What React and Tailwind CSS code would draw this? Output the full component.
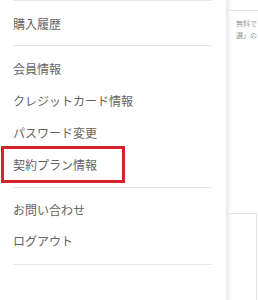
import React from 'react';

const sections = [
  ['購入履歴'],
  ['会員情報', 'クレジットカード情報', 'パスワード変更', '契約プラン情報'],
  ['お問い合わせ', 'ログアウト'],
];

const MenuItem = ({ label, tall, marked }) => (
  <div className={`relative flex items-center ${tall ? 'h-[32px]' : 'h-[31px]'}`}>
    <span>{label}</span>
    {marked && (
      <div className="absolute -left-[12px] -top-[3px] w-[124px] h-[37px] border-[3px] border-[#d7222c]" />
    )}
  </div>
);

const App = () => {
  return (
    <div
      className="flex w-[258px] h-[300px] overflow-hidden bg-white text-[12px] text-[#646464]"
      style={{ fontFamily: '"Noto Sans CJK JP", "Noto Sans", sans-serif' }}
    >
      {/* Side menu */}
      <nav className="w-[226px] shrink-0 pl-[13px] pr-[14px]">
        <div className="border-t border-[#e6e6e6] pt-[7px] pb-[6px]">
          <MenuItem label={sections[0][0]} />
        </div>
        <div className="border-t border-[#e6e6e6] pt-[7px] pb-[6px]">
          {sections[1].map((label, i) => (
            <MenuItem key={label} label={label} tall marked={i === 3} />
          ))}
        </div>
        <div className="border-t border-[#e6e6e6] pt-[6px] pb-[8px]">
          {sections[2].map((label) => (
            <MenuItem key={label} label={label} />
          ))}
        </div>
        <div className="border-t border-[#e6e6e6]" />
      </nav>

      {/* Page behind the menu */}
      <div className="relative flex-1 flex flex-col">
        <div className="mt-[10px] ml-[3px] border-t border-[#e4e4e4]" />
        <div className="pl-[10px] pt-[6px] text-[7px] leading-[12px] text-[#9a9a9a] whitespace-nowrap">
          <div>無料で</div>
          <div>選」の</div>
        </div>
        <div className="mt-[172px] mr-[1px] flex-1 border-t border-r border-[#e4e4e4]" />
        <div className="absolute left-0 top-0 bottom-0 w-[6px] bg-gradient-to-r from-[#e9e9e9] to-transparent" />
      </div>
    </div>
  );
};

export default App;
